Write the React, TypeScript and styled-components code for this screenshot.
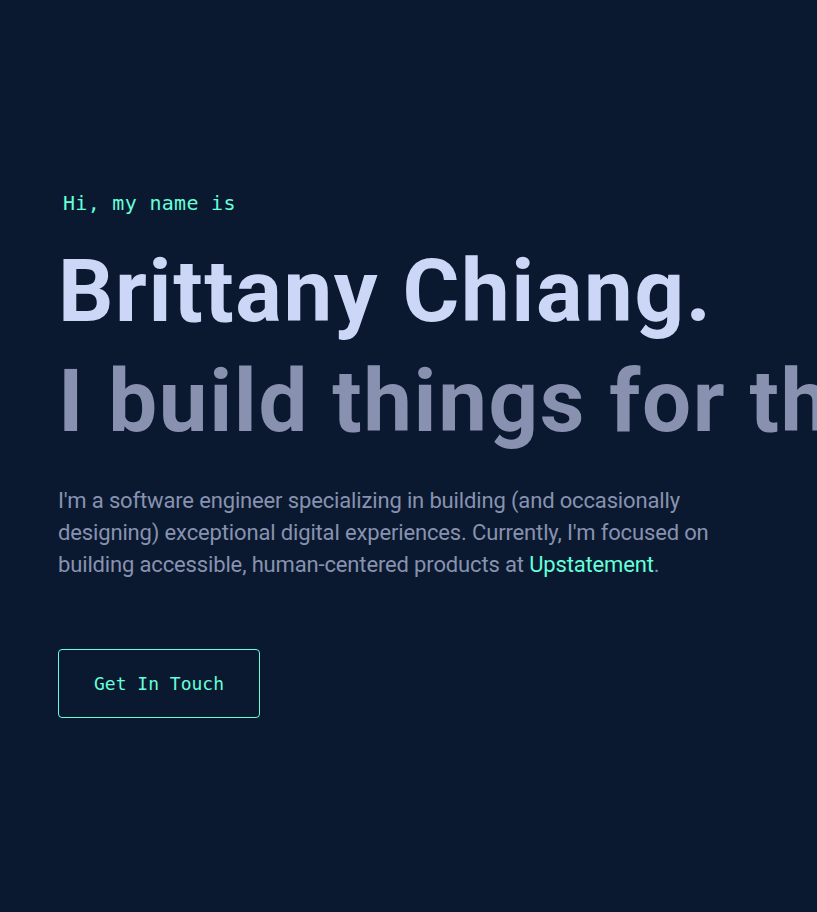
import React from "react";
import styled, { createGlobalStyle } from "styled-components";

const Global = createGlobalStyle`
  html, body { margin: 0; padding: 0; background: #0a192f; overflow: hidden; }
  body { width: 817px; height: 912px; }
  * { box-sizing: border-box; }
`;

const Hero = styled.section`
  display: flex;
  flex-direction: column;
  align-items: flex-start;
  padding: 188px 0 0 58px;
  height: 912px;
  overflow: hidden;
`;

const Intro = styled.h1`
  margin: 0 0 18px 5px;
  font-family: "DejaVu Sans Mono", monospace;
  font-size: 20px;
  font-weight: 400;
  line-height: 30px;
  letter-spacing: 0.3px;
  color: #64ffda;
`;

const BigTitle = styled.h2<{ $muted?: boolean }>`
  margin: 0;
  font-family: Roboto, "Liberation Sans", sans-serif;
  font-size: 87px;
  font-weight: 700;
  line-height: 110px;
  letter-spacing: 1.6px;
  white-space: nowrap;
  color: ${(p) => (p.$muted ? "#8892b0" : "#ccd6f6")};
`;

const Blurb = styled.p`
  margin: 29px 0 0;
  max-width: 690px;
  font-family: Roboto, "Liberation Sans", sans-serif;
  font-size: 22px;
  line-height: 32px;
  letter-spacing: -0.15px;
  color: #8892b0;
`;

const Link = styled.a`
  color: #64ffda;
  text-decoration: none;
`;

const Button = styled.a`
  margin-top: 68px;
  display: flex;
  align-items: center;
  justify-content: center;
  width: 202px;
  height: 69px;
  border: 1px solid #64ffda;
  border-radius: 4px;
  font-family: "DejaVu Sans Mono", monospace;
  font-size: 18px;
  color: #64ffda;
  text-decoration: none;
`;

export default function App() {
  return (
    <>
      <Global />
      <Hero>
        <Intro>Hi, my name is</Intro>
        <BigTitle>Brittany Chiang.</BigTitle>
        <BigTitle $muted>I build things for the web.</BigTitle>
        <Blurb>
          I'm a software engineer specializing in building (and occasionally
          designing) exceptional digital experiences. Currently, I'm focused on
          building accessible, human-centered products at{" "}
          <Link href="#">Upstatement</Link>.
        </Blurb>
        <Button href="#">Get In Touch</Button>
      </Hero>
    </>
  );
}
